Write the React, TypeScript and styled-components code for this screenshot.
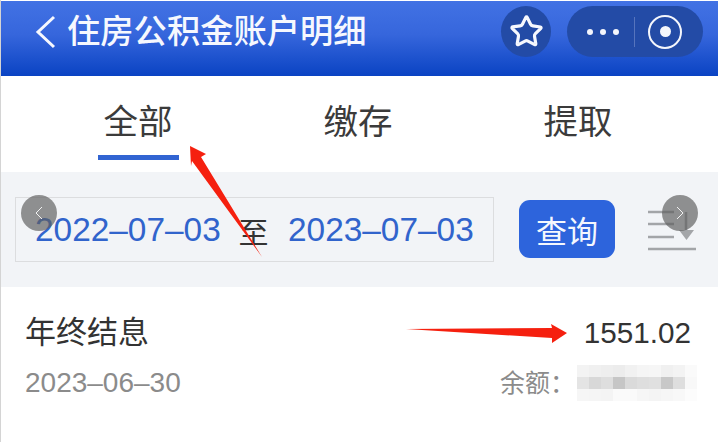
import styled, { createGlobalStyle } from 'styled-components';
import { Star } from 'lucide-react';

const CJK = `"Liberation Sans", "Noto Sans CJK SC", sans-serif`;

const GlobalStyle = createGlobalStyle`
  html, body {
    margin: 0;
    padding: 0;
    background: #fff;
  }
  * {
    box-sizing: border-box;
  }
`;

const Page = styled.div`
  position: relative;
  width: 718px;
  height: 442px;
  overflow: hidden;
  padding-top: 1px;
  background: #fff;
  border-left: 1px solid #d4d4d4;
  font-family: ${CJK};
`;

const Header = styled.header`
  height: 75px;
  display: flex;
  align-items: center;
  padding: 0 15px 14px 33px;
  background: linear-gradient(180deg, #4272e4 0%, #3666dc 45%, #0a43c3 100%);
  color: #f6f8fe;
`;

const BackIcon = styled.svg`
  width: 22px;
  height: 34px;
  margin-right: 11px;
  flex: none;
`;

const Title = styled.h1`
  margin: 0;
  font-size: 33.3px;
  line-height: 40px;
  font-weight: 500;
  white-space: nowrap;
`;

const Capsules = styled.div`
  margin-left: auto;
  display: flex;
  gap: 16px;
`;

const RoundButton = styled.div`
  width: 50px;
  height: 51px;
  border-radius: 50%;
  background: #234ba6;
  display: flex;
  align-items: center;
  justify-content: center;
`;

const Pill = styled.div`
  width: 136px;
  height: 51px;
  border-radius: 26px;
  background: #234ba6;
  display: flex;
  align-items: center;
  padding-left: 20px;
`;

const Dots = styled.div`
  display: flex;
  gap: 7px;
  width: 47px;
`;

const Dot = styled.span`
  width: 6px;
  height: 6px;
  border-radius: 50%;
  background: #f4f6fc;
`;

const Divider = styled.span`
  width: 1px;
  height: 30px;
  background: #5674bd;
  margin-right: 13px;
`;

const Target = styled.span`
  width: 34px;
  height: 34px;
  border: 2px solid #f4f6fc;
  border-radius: 50%;
  display: flex;
  align-items: center;
  justify-content: center;

  &::after {
    content: '';
    width: 11px;
    height: 11px;
    border-radius: 50%;
    background: #f4f6fc;
  }
`;

const Tabs = styled.nav`
  height: 96px;
  display: grid;
  grid-template-columns: repeat(3, 220px);
  padding-left: 27px;
`;

const Tab = styled.div<{ $active?: boolean }>`
  position: relative;
  text-align: center;
  padding-top: 25px;
  font-size: 34.5px;
  line-height: 42px;
  color: #3b3b3b;

  &::after {
    content: '';
    display: ${(p) => (p.$active ? 'block' : 'none')};
    position: absolute;
    left: 70px;
    top: 79px;
    width: 81px;
    height: 5px;
    background: #3164d2;
  }
`;

const FilterBar = styled.section`
  height: 115px;
  display: flex;
  align-items: center;
  padding: 0 21px 1px 14px;
  background: #f2f4f7;
`;

const DateBox = styled.div`
  width: 479px;
  height: 65px;
  display: flex;
  align-items: center;
  padding: 1px 0 0 19px;
  border: 1.5px solid #dcdddf;
  font-size: 33.4px;
`;

const DateValue = styled.span`
  color: #3164cc;
  width: 184px;
  white-space: nowrap;
`;

const DateSep = styled.span`
  color: #333;
  width: 69px;
  font-size: 30px;
  text-align: center;
`;

const QueryButton = styled.button`
  width: 96px;
  height: 58px;
  margin-left: 25px;
  border: 0;
  border-radius: 11px;
  background: #2d64dc;
  color: #f4f7fe;
  font-family: inherit;
  font-size: 31px;
  padding: 0;
`;

const SortIcon = styled.svg`
  width: 50px;
  height: 50px;
  margin-left: auto;
  margin-top: 10px;
  flex: none;
`;

const Record = styled.article`
  padding: 26px 27px 0 24px;
  display: grid;
  grid-template-columns: 1fr auto;
  row-gap: 12px;
  align-items: center;
`;

const RecordName = styled.div`
  font-size: 31px;
  line-height: 40px;
  color: #333;
`;

const Amount = styled.div`
  font-size: 29.7px;
  line-height: 40px;
  color: #333;
  text-align: right;
`;

const RecordDate = styled.div`
  font-size: 28px;
  line-height: 36px;
  color: #8b8b8b;
`;

const Balance = styled.div`
  display: flex;
  align-items: center;
  margin-right: -6px;
  font-size: 25px;
  line-height: 36px;
  color: #8b8b8b;
`;

const Mosaic = styled.div`
  display: grid;
  grid-template-columns: repeat(10, 12px);
  grid-auto-rows: 12px;
  margin-left: 2px;
`;

const MosaicCell = styled.span<{ $shade: number }>`
  background: rgb(${(p) => p.$shade}, ${(p) => p.$shade}, ${(p) => p.$shade});
`;

const HintCircle = styled.div<{ $side: 'left' | 'right' }>`
  position: absolute;
  top: 195px;
  ${(p) => (p.$side === 'left' ? 'left: 20px;' : 'left: 661px;')}
  width: 36px;
  height: 36px;
  border-radius: 50%;
  background: rgba(95, 95, 95, 0.68);
  display: flex;
  align-items: center;
  justify-content: center;
`;

const HintChevron = styled.svg`
  width: 12px;
  height: 16px;
`;

const Annotations = styled.svg`
  position: absolute;
  left: -1px;
  top: 0;
  width: 718px;
  height: 442px;
  pointer-events: none;
`;

const shades = [
  243, 240, 238, 236, 241, 245, 246, 240, 243, 250,
  228, 216, 222, 198, 218, 222, 224, 200, 222, 248,
  246, 245, 244, 250, 250, 246, 244, 246, 248, 252,
];

export default function App() {
  return (
    <Page>
      <GlobalStyle />
      <Header>
        <BackIcon viewBox="0 0 22 34">
          <path d="M20 2 L4 17 L20 32" fill="none" stroke="#f6f8fe" strokeWidth="3" />
        </BackIcon>
        <Title>住房公积金账户明细</Title>
        <Capsules>
          <RoundButton>
            <Star size={35} color="#f6f8fe" strokeWidth={2.2} />
          </RoundButton>
          <Pill>
            <Dots>
              <Dot />
              <Dot />
              <Dot />
            </Dots>
            <Divider />
            <Target />
          </Pill>
        </Capsules>
      </Header>
      <Tabs>
        <Tab $active>全部</Tab>
        <Tab>缴存</Tab>
        <Tab>提取</Tab>
      </Tabs>
      <FilterBar>
        <DateBox>
          <DateValue>2022–07–03</DateValue>
          <DateSep>至</DateSep>
          <DateValue>2023–07–03</DateValue>
        </DateBox>
        <QueryButton>查询</QueryButton>
        <SortIcon viewBox="0 0 50 50">
          <g stroke="#a3a5a8" strokeWidth="2.5" fill="none">
            <path d="M1 3 H27" />
            <path d="M1 15 H27" />
            <path d="M1 28 H27" />
            <path d="M1 40 H49" />
            <path d="M39 3 V21" />
          </g>
          <path d="M32 21 H47 L39.5 31 Z" fill="#a3a5a8" />
        </SortIcon>
      </FilterBar>
      <Record>
        <RecordName>年终结息</RecordName>
        <Amount>1551.02</Amount>
        <RecordDate>2023–06–30</RecordDate>
        <Balance>
          余额：
          <Mosaic>
            {shades.map((shade, i) => (
              <MosaicCell key={i} $shade={shade} />
            ))}
          </Mosaic>
        </Balance>
      </Record>
      <HintCircle $side="left">
        <HintChevron viewBox="0 0 12 16">
          <path d="M9 2 L3 8 L9 14" fill="none" stroke="#f2f2f2" strokeWidth="1" />
        </HintChevron>
      </HintCircle>
      <HintCircle $side="right">
        <HintChevron viewBox="0 0 12 16">
          <path d="M3 2 L9 8 L3 14" fill="none" stroke="#f2f2f2" strokeWidth="1" />
        </HintChevron>
      </HintCircle>
      <Annotations viewBox="0 0 718 442">
        <path d="M190 146 L206 154 L201 157 L262 257 L192 161 L191 166 Z" fill="#f5200f" />
        <path d="M406 329 L552 328 L551 324 L567 333 L552 343 L552 338 Z" fill="#f5200f" />
      </Annotations>
    </Page>
  );
}
